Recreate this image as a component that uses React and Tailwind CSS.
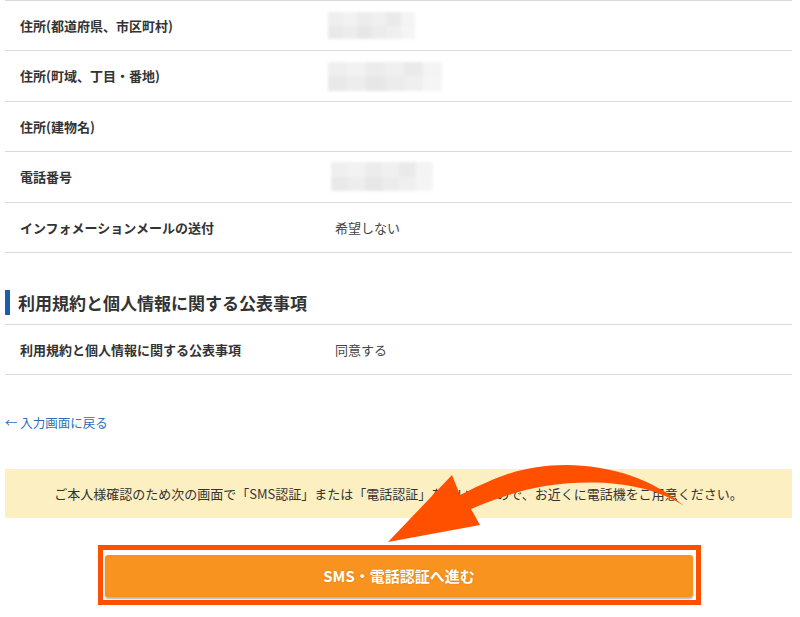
import React from 'react';

const rows = [
  { label: '住所(都道府県、市区町村)', blur: 'w-[87px] h-[27px] ml-0' },
  { label: '住所(町域、丁目・番地)', blur: 'w-[114px] h-[29px] ml-0' },
  { label: '住所(建物名)' },
  { label: '電話番号', blur: 'w-[102px] h-[29px] ml-[3px]' },
  { label: 'インフォメーションメールの送付', value: '希望しない' },
];

// pixelated placeholder for the masked personal data
const Mosaic = ({ className }) => (
  <div className={`${className} grid grid-cols-6 grid-rows-2 overflow-hidden blur-[1.5px]`}>
    {['#efefef', '#f2f2f2', '#ececec', '#f0f0f0', '#eaeaea', '#f4f4f4',
      '#e9e9e9', '#ededed', '#e7e7e7', '#ececec', '#efefef', '#f5f5f5'].map((c, i) => (
      <div key={i} style={{ backgroundColor: c }} />
    ))}
  </div>
);

const Row = ({ label, value, blur }) => (
  <div className="flex h-[50.4px] items-center border-b border-[#d9d9d9]">
    <div className="w-[323px] pl-[15px] text-[13px] font-bold text-[#333]">{label}</div>
    <div className="flex items-center text-[13px] text-[#444]">
      {blur && <Mosaic className={blur} />}
      {value && <span className="pl-[7px]">{value}</span>}
    </div>
  </div>
);

export default function App() {
  return (
    <div className="relative w-[800px] h-[617px] overflow-hidden bg-white font-['Noto_Sans_CJK_JP','Noto_Sans',sans-serif]">
      <div className="pl-[5px] pr-[8px]">
        <div className="border-t border-[#d9d9d9]">
          {rows.map((r) => (
            <Row key={r.label} {...r} />
          ))}
        </div>

        <div className="mt-[37px] border-b border-[#d9d9d9] pb-[9px]">
          <div className="flex h-[25px] items-center border-l-[5px] border-[#1b5faa] pl-[8px] text-[17px] font-bold leading-none text-[#333]">
            利用規約と個人情報に関する公表事項
          </div>
        </div>
        <Row label="利用規約と個人情報に関する公表事項" value="同意する" />

        <div className="mt-[39px] h-[18px] text-[12.5px] leading-[18px] text-[#2f6db5]">
          ← 入力画面に戻る
        </div>

        <div className="mt-[37px] flex h-[49px] items-center justify-center bg-[#fcefc2] text-[13px] text-[#333]">
          ご本人様確認のため次の画面で「SMS認証」または「電話認証」を行いますので、お近くに電話機をご用意ください。
        </div>
      </div>

      <div className="ml-[98px] mt-[27px] w-[603px] border-[5px] border-[#ff5000] bg-white pb-[3px] pl-[2px] pr-[3px] pt-[5px]">
        <div className="flex h-[42px] items-center justify-center rounded-[3px] bg-[#f7931e] text-[15px] font-bold text-white shadow-[0_2px_2px_rgba(0,0,0,0.3)] [text-shadow:0_0_2px_rgba(0,0,0,0.15)]">
          SMS・電話認証へ進む
        </div>
      </div>

      <svg
        className="pointer-events-none absolute left-0 top-0"
        width="800"
        height="617"
        viewBox="0 0 800 617"
      >
        <path
          d="M684 506 C640 467 565 454 505 475 C488 481 472 489 460 495 L452 475 L388 542 L480 525 L471 509 C492 500 520 490 545 486 C600 478 650 484 684 506 Z"
          fill="#ff5000"
        />
      </svg>
    </div>
  );
}
